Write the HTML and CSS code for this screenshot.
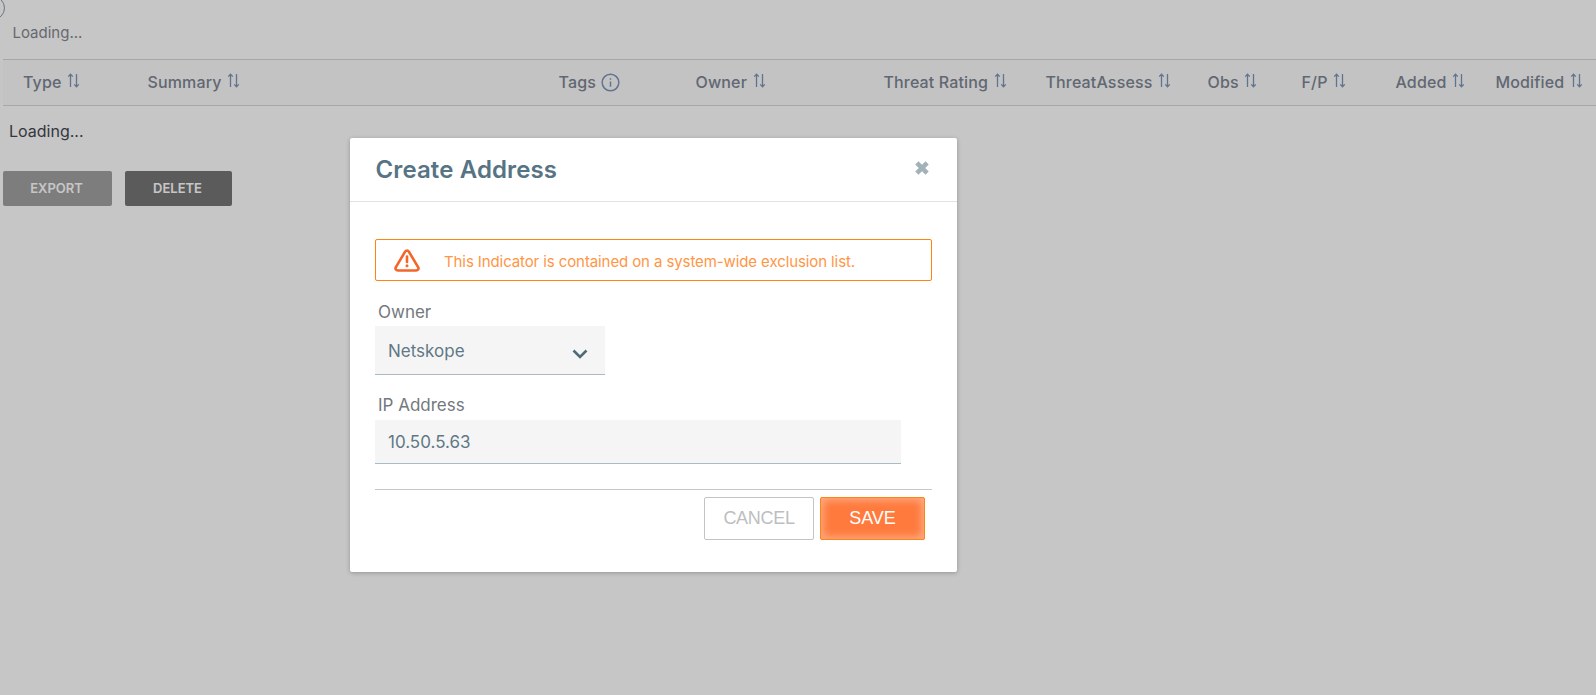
FILE: index.html
```html
<!DOCTYPE html>
<html lang="en">
<head>
<meta charset="utf-8">
<title>Create Address</title>
<link rel="stylesheet" href="styles.css">
</head>
<body>
<svg width="0" height="0" class="defs" aria-hidden="true">
  <symbol id="sort" viewBox="0 0 13 15">
    <path d="M3.5 14V1.2M1.2 3.600 3.500 1.200 5.800 3.600M9.500 1v12.800M7.200 11.400l2.300 2.400 2.300-2.400" fill="none" stroke="currentColor" stroke-width="1.3"/>
  </symbol>
</svg>
<main class="page">
  <span class="avatar"></span>
  <p class="loading-top">Loading...</p>
  <div class="thead">
    <div class="th">Type <svg class="sort"><use href="#sort"/></svg></div>
    <div class="th">Summary <svg class="sort"><use href="#sort"/></svg></div>
    <div class="th">Tags
      <svg class="info" viewBox="0 0 18 18"><circle cx="9" cy="9" r="7.900" fill="none" stroke="currentColor" stroke-width="1.400"/><path d="M9 8v5M9 5v1.500" fill="none" stroke="currentColor" stroke-width="1.400"/></svg>
    </div>
    <div class="th">Owner <svg class="sort"><use href="#sort"/></svg></div>
    <div class="th">Threat Rating <svg class="sort"><use href="#sort"/></svg></div>
    <div class="th">ThreatAssess <svg class="sort"><use href="#sort"/></svg></div>
    <div class="th">Obs <svg class="sort"><use href="#sort"/></svg></div>
    <div class="th">F/P <svg class="sort"><use href="#sort"/></svg></div>
    <div class="th">Added <svg class="sort"><use href="#sort"/></svg></div>
    <div class="th">Modified <svg class="sort"><use href="#sort"/></svg></div>
  </div>
  <p class="loading-body">Loading...</p>
  <div class="actions">
    <button class="btn btn-export" type="button">EXPORT</button>
    <button class="btn btn-delete" type="button">DELETE</button>
  </div>
</main>
<div class="overlay"></div>
<section class="modal">
  <header class="modal-head">
    <h1>Create Address</h1>
    <svg class="close" viewBox="0 0 14 14"><path d="M2.500 2.500l9 9M11.500 2.500l-9 9" fill="none" stroke="currentColor" stroke-width="4"/></svg>
  </header>
  <div class="modal-body">
    <div class="alert">
      <svg class="warn" viewBox="0 0 28 24"><path d="M14 2.500c.8 0 1.400.4 1.900 1.200l9.200 15.400c1 1.700 0 3.400-2 3.400H4.900c-2 0-3-1.700-2-3.400l9.200-15.400c.5-.8 1.100-1.200 1.900-1.200Z" fill="none" stroke="currentColor" stroke-width="2.600" stroke-linejoin="round"/><path d="M14 8.500v5.500" fill="none" stroke="currentColor" stroke-width="2.600" stroke-linecap="round"/><circle cx="14" cy="17.800" r="1.500" fill="currentColor"/></svg>
      <span>This Indicator is contained on a system-wide exclusion list.</span>
    </div>
    <div class="label owner-label">Owner</div>
    <div class="select">
      <span>Netskope</span>
      <svg class="chev" viewBox="0 0 16 10"><path d="M1.500 1.500 8 8l6.500-6.500" fill="none" stroke="currentColor" stroke-width="2.600"/></svg>
    </div>
    <div class="label ip-label">IP Address</div>
    <div class="input">10.50.5.63</div>
    <footer class="modal-foot">
      <button class="cancel" type="button">CANCEL</button>
      <button class="save" type="button">SAVE</button>
    </footer>
  </div>
</section>
</body>
</html>
```
FILE: styles.css
```css
* { box-sizing: border-box; }
html, body { margin: 0; height: 100%; }
body {
  background: #fff;
  font-family: Inter, "Liberation Sans", sans-serif;
  overflow: hidden;
  position: relative;
}
.defs { position: absolute; }
.page { padding: 0 0 0 3px; position: relative; height: 695px; }
.avatar {
  position: absolute;
  left: -19px;
  top: -4px;
  width: 24px;
  height: 24px;
  border: 1.500px solid #8b97a8;
  border-radius: 50%;
}
.loading-top {
  margin: 0;
  padding: 24px 0 0 9.500px;
  height: 59px;
  font-size: 15px;
  line-height: 18px;
  color: #858890;
}
.thead {
  display: grid;
  grid-template-columns: 124.500px 411px 137px 188px 162px 162px 94px 94px 100px 120px;
  height: 47px;
  padding-bottom: 2px;
  background: #fafcfa;
  border-top: 1px solid #d5d8de;
  border-bottom: 1px solid #d5d8de;
  align-items: center;
}
.th {
  padding-left: 20px;
  font-size: 16px;
  font-weight: 500;
  letter-spacing: .15px;
  color: #7e8594;
  white-space: nowrap;
  display: flex;
  align-items: center;
  gap: 5.500px;
}
.sort { width: 13px; height: 15px; color: #7f94bb; margin-top: -3px; }
.info { width: 19px; height: 19px; color: #7f94bb; margin-left: -1px; margin-top: 2px; }
.loading-body {
  margin: 0;
  padding: 16px 0 0 6px;
  height: 65px;
  font-size: 16px;
  line-height: 19px;
  color: #444850;
}
.actions { display: flex; gap: 13px; }
.btn {
  height: 35px;
  border: 0;
  border-radius: 2px;
  padding: 0 2px 1px 0;
  font: 600 13px Inter, sans-serif;
  color: #fff;
}
.btn-export { width: 109px; background: #a1a1a1; }
.btn-delete { width: 107px; background: #767677; }
.overlay {
  position: absolute;
  inset: 0;
  background: rgba(0, 0, 0, .225);
}
.modal {
  position: absolute;
  left: 350px;
  top: 138px;
  width: 607px;
  height: 434px;
  background: #fff;
  border-radius: 2px;
  box-shadow: 0 1px 4px rgba(0, 0, 0, .25);
}
.modal-head {
  height: 64px;
  padding: 0 27px 0 25.500px;
  border-bottom: 1px solid #e2e2e2;
  display: flex;
  align-items: center;
  justify-content: space-between;
}
.modal-head h1 {
  margin: 0;
  font-size: 24px;
  font-weight: 600;
  letter-spacing: .12px;
  color: #567484;
}
.close { width: 16px; height: 16px; color: #a3b1b9; margin-top: -3px; }
.modal-body { padding: 37px 25px 0; }
.alert {
  height: 42px;
  border: 1px solid #ff8412;
  border-radius: 2px;
  display: flex;
  align-items: center;
  padding-left: 17px;
  font-size: 15px;
  letter-spacing: -.1px;
  color: #ff9645;
}
.alert span { margin-top: 2px; }
.warn { width: 28px; height: 24px; color: #f4652a; margin-right: 23px; }
.label {
  padding-left: 3px;
  padding-top: 1px;
  font-size: 17px;
  line-height: 20px;
  color: #73787e;
}
.owner-label { margin-top: 20px; height: 25px; }
.ip-label { margin-top: 19px; height: 26px; }
.select, .input {
  background: #f5f5f5;
  border-bottom: 1px solid #a9bcc6;
  font-size: 17px;
  color: #5f7886;
  display: flex;
  align-items: center;
  padding-left: 13px;
}
.select {
  width: 230px;
  height: 49px;
  padding-top: 2px;
  justify-content: space-between;
  padding-right: 17px;
}
.chev { width: 16px; height: 10px; color: #4f6a78; margin-top: 6px; }
.input { width: 526px; height: 44px; }
.modal-foot {
  margin-top: 25px;
  border-top: 1px solid #c8c8c8;
  padding: 7px 7px 0 0;
  display: flex;
  justify-content: flex-end;
  gap: 6px;
}
.cancel, .save {
  height: 43px;
  border-radius: 2px;
  font: 18px "Liberation Sans", Arial, sans-serif;
}
.cancel {
  width: 110px;
  background: #fff;
  border: 1px solid #c4c4c4;
  color: #bcbec0;
  letter-spacing: -.3px;
}
.save {
  width: 105px;
  background: #ff7a3c;
  border: 1px solid #ff8412;
  color: #fff;
  box-shadow: inset 0 0 9px 2px rgba(255, 255, 255, .4);
}
```
